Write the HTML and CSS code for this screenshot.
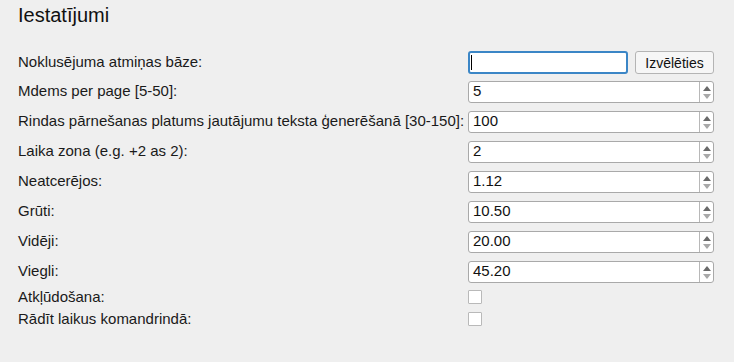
FILE: index.html
```html
<!DOCTYPE html>
<html lang="lv">
<head>
	<meta charset="UTF-8">
	<title>Iestatījumi</title>
	<link rel="stylesheet" href="styles.css">
</head>
<body>
<main class="settings">
	<h1 class="title">Iestatījumi</h1>

	<div class="form">
		<div class="row">
			<label class="label">Noklusējuma atmiņas bāze:</label>
			<div class="pick">
				<div class="field focused"><span class="caret"></span></div>
				<button type="button" class="choose">Izvēlēties</button>
			</div>
		</div>

		<div class="row">
			<label class="label">Mdems per page [5-50]:</label>
			<div class="field spin"><span class="value">5</span><span class="arrows"><i class="up"></i><i class="down"></i></span></div>
		</div>

		<div class="row">
			<label class="label">Rindas pārnešanas platums jautājumu teksta ģenerēšanā [30-150]:</label>
			<div class="field spin"><span class="value">100</span><span class="arrows"><i class="up"></i><i class="down"></i></span></div>
		</div>

		<div class="row">
			<label class="label">Laika zona (e.g. +2 as 2):</label>
			<div class="field spin"><span class="value">2</span><span class="arrows"><i class="up"></i><i class="down"></i></span></div>
		</div>

		<div class="row">
			<label class="label">Neatcerējos:</label>
			<div class="field spin"><span class="value">1.12</span><span class="arrows"><i class="up"></i><i class="down"></i></span></div>
		</div>

		<div class="row">
			<label class="label">Grūti:</label>
			<div class="field spin"><span class="value">10.50</span><span class="arrows"><i class="up"></i><i class="down"></i></span></div>
		</div>

		<div class="row">
			<label class="label">Vidēji:</label>
			<div class="field spin"><span class="value">20.00</span><span class="arrows"><i class="up"></i><i class="down"></i></span></div>
		</div>

		<div class="row">
			<label class="label">Viegli:</label>
			<div class="field spin"><span class="value">45.20</span><span class="arrows"><i class="up"></i><i class="down"></i></span></div>
		</div>

		<div class="row check-row first-check">
			<label class="label" for="debug">Atkļūdošana:</label>
			<input type="checkbox" id="debug" class="check">
		</div>

		<div class="row check-row">
			<label class="label" for="times">Rādīt laikus komandrindā:</label>
			<input type="checkbox" id="times" class="check">
		</div>
	</div>
</main>
</body>
</html>
```

FILE: styles.css
```css
html, body{
	margin: 0;
	background: #efefef;
}

body{
	font-family: "Liberation Sans", Arial, sans-serif;
	font-size: 15px;
	color: #1a1a1a;
}

.settings{
	padding: 3px 20px 0 18px;
}

.title{
	margin: 0;
	font-size: 20px;
	font-weight: normal;
	line-height: 24px;
	color: #111;
}

.form{
	display: flex;
	flex-direction: column;
	gap: 8px;
	margin-top: 24px;
}

.row{
	display: grid;
	grid-template-columns: 450px 246px;
	align-items: center;
	height: 22px;
}

.label{
	white-space: nowrap;
	line-height: 18px;
	margin-top: -2px;
}

/* checkbox rows sit closer together */
.check-row{
	margin-top: -5px;
}

.check-row + .check-row{
	margin-top: -8px;
}

.check-row .label{
	margin-top: 0;
}

.pick{
	display: flex;
	gap: 7px;
	height: 23px;
}

.field{
	box-sizing: border-box;
	height: 22px;
	background: #fff;
	border: 1px solid #a9a9a9;
	border-radius: 3px;
	display: flex;
	align-items: center;
}

.field.focused{
	width: 160px;
	height: 23px;
	border: 2px solid #3b86c6;
	padding-left: 1px;
}

.caret{
	width: 1px;
	height: 15px;
	background: #000;
}

.value{
	flex: 1;
	padding-left: 4px;
	line-height: 18px;
	margin-top: -2px;
	color: #111;
}

.arrows{
	width: 13px;
	height: 100%;
	border-left: 1px solid #b8b8b8;
	display: flex;
	flex-direction: column;
	align-items: center;
	justify-content: center;
	gap: 3px;
}

.arrows i{
	width: 0;
	height: 0;
	border-left: 4px solid transparent;
	border-right: 4px solid transparent;
}

.arrows .up{
	border-bottom: 5px solid #6a6a6a;
}

.arrows .down{
	border-top: 5px solid #a8a8a8;
}

.choose{
	width: 79px;
	height: 23px;
	padding: 0;
	font-family: inherit;
	font-size: 14px;
	color: #111;
	background: #f6f6f6;
	border: 1px solid #b4b4b4;
	border-radius: 3px;
}

.check{
	appearance: none;
	margin: 0;
	width: 14px;
	height: 14px;
	background: #fff;
	border: 1px solid #b9b9b9;
	border-radius: 1px;
}
```
